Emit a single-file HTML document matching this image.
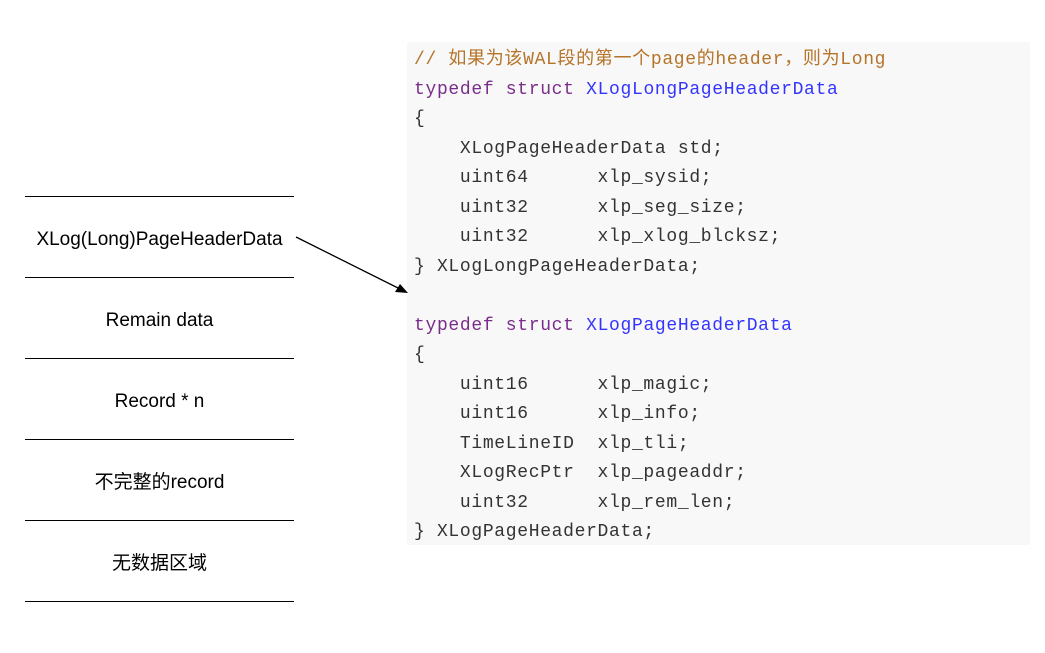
<!DOCTYPE html>
<html><head><meta charset="utf-8"><style>
html,body{margin:0;padding:0;background:#fff;width:1045px;height:653px;overflow:hidden;position:relative}
.hl{position:absolute;left:25px;width:269px;height:0;border-top:1.5px solid #000}
.lb{position:absolute;left:25px;width:269px;text-align:center;font:19px/20px "Liberation Sans","Noto Sans CJK SC",sans-serif;color:#000;height:20px;overflow:visible}
.code{position:absolute;left:407px;top:42px;width:623px;height:503px;background:#f8f8f8}
.ln{position:absolute;left:414px;font:18px/20px "Liberation Mono","Noto Sans CJK SC",monospace;letter-spacing:0.67px;color:#333;white-space:pre}
.c{color:#b5742a}.k{color:#7a2c8a}.t{color:#3434ff}
</style></head><body>
<div class="hl" style="top:196px"></div>
<div class="hl" style="top:277px"></div>
<div class="hl" style="top:358px"></div>
<div class="hl" style="top:439px"></div>
<div class="hl" style="top:520px"></div>
<div class="hl" style="top:601px"></div>
<div class="lb" style="top:230px">XLog(Long)PageHeaderData</div>
<div class="lb" style="top:311px">Remain data</div>
<div class="lb" style="top:392px">Record * n</div>
<div class="lb" style="top:473px">不完整的record</div>
<div class="lb" style="top:554px">无数据区域</div>
<div class="code"></div>
<svg style="position:absolute;left:0;top:0" width="1045" height="653">
<line x1="296" y1="237" x2="400" y2="289" stroke="#000" stroke-width="1.3"/>
<polygon points="408,293 395,292 400,284" fill="#000"/>
</svg>
<div class="ln c" style="top:50px">// 如果为该WAL段的第一个page的header，则为Long</div>
<div class="ln" style="top:80px"><span class="k">typedef struct</span> <span class="t">XLogLongPageHeaderData</span></div>
<div class="ln" style="top:109px">{</div>
<div class="ln" style="top:139px">    XLogPageHeaderData std;</div>
<div class="ln" style="top:168px">    uint64      xlp_sysid;</div>
<div class="ln" style="top:198px">    uint32      xlp_seg_size;</div>
<div class="ln" style="top:227px">    uint32      xlp_xlog_blcksz;</div>
<div class="ln" style="top:257px">} XLogLongPageHeaderData;</div>
<div class="ln" style="top:316px"><span class="k">typedef struct</span> <span class="t">XLogPageHeaderData</span></div>
<div class="ln" style="top:345px">{</div>
<div class="ln" style="top:375px">    uint16      xlp_magic;</div>
<div class="ln" style="top:404px">    uint16      xlp_info;</div>
<div class="ln" style="top:434px">    TimeLineID  xlp_tli;</div>
<div class="ln" style="top:463px">    XLogRecPtr  xlp_pageaddr;</div>
<div class="ln" style="top:493px">    uint32      xlp_rem_len;</div>
<div class="ln" style="top:522px">} XLogPageHeaderData;</div>
</body></html>
